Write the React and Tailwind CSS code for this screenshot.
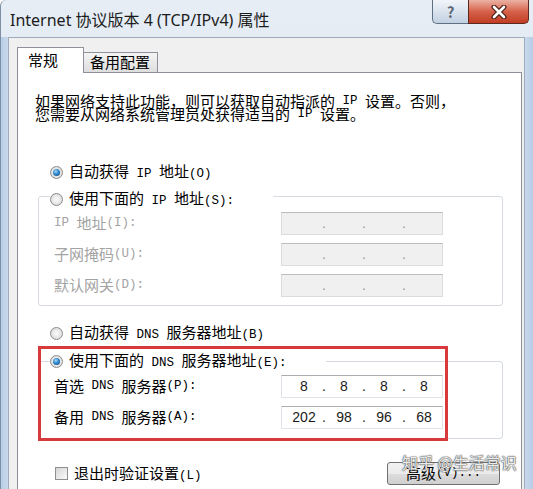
import React from 'react';

// Latin runs are set in a half-width mono face, like SimSun does in the dialog
const Mixed = ({text}) => (
    <>
        {text.split(/([\x20-\x7e]+)/).map((part, i) =>
            /^[\x20-\x7e]+$/.test(part) ? (
                <span key={i} className="font-['Liberation_Mono',monospace] text-[12.5px] whitespace-pre">{part}</span>
            ) : (
                <span key={i}>{part}</span>
            )
        )}
    </>
);

const Radio = ({checked}) => (
    <div
        className="flex h-[13px] w-[13px] shrink-0 items-center justify-center rounded-full border border-[#8c8c8c] bg-[radial-gradient(circle_at_50%_50%,#fbfbfb_0%,#e6e6e6_55%,#cdcdcd_100%)]">
        {checked && (
            <div
                className="h-[7px] w-[7px] rounded-full bg-[radial-gradient(circle_at_40%_35%,#a6dcf8_0%,#2f86cc_45%,#0b3d78_100%)]"/>
        )}
    </div>
);

const IpBox = ({values = ['', '', '', ''], disabled = false}) => (
    <div
        className={`flex h-[23px] w-[162px] items-center border pl-[4px] font-['Liberation_Sans',sans-serif] text-[14px] ${
            disabled
                ? 'border-[#dcdcdc] border-t-[#bdbdbd] bg-[#f0f0f0] text-[#9a9a9a]'
                : 'border-[#e2e3ea] border-t-[#abadb3] bg-white text-[#1a1a1a]'
        }`}
    >
        {values.map((v, i) => (
            <React.Fragment key={i}>
                <span className="w-[36px] text-center">{v}</span>
                {i < 3 && <span className="w-[4px] text-center">.</span>}
            </React.Fragment>
        ))}
    </div>
);

const FieldRow = ({label, values, disabled}) => (
    <div className="flex h-[23px] items-center">
        <div className={`flex h-[23px] w-[227px] items-center whitespace-nowrap ${disabled ? 'text-[#a3a3a3]' : 'text-black'}`}>
            <Mixed text={label}/>
        </div>
        <IpBox values={values} disabled={disabled}/>
    </div>
);

const App = () => {
    return (
        <div
            className="relative flex h-[489px] w-[533px] flex-col overflow-hidden rounded-tl-[6px] border-l border-[#7d8ea5] bg-gradient-to-b from-[#e6edf5] to-[#d0dcea] font-['Noto_Sans_CJK_SC',sans-serif] text-[15px] text-black">
            {/* title bar */}
            <div className="flex h-[37px] shrink-0">
                <span
                    className="ml-[9px] mt-[9px] whitespace-nowrap font-['Noto_Sans','Noto_Sans_CJK_SC',sans-serif] text-[16px] leading-[22px] text-[#1c1c1c]">
                    Internet 协议版本 4 (TCP/IPv4) 属性
                </span>
                <div className="ml-auto mr-[4px] flex h-[24px]">
                    <div
                        className="flex w-[36px] items-center justify-center rounded-bl-[5px] border border-t-0 border-r-0 border-[#5f6f84] bg-gradient-to-b from-[#f1f5fa] via-[#dae3ee] to-[#c2d0e1] text-[15px] font-bold leading-none text-[#5b6777]">
                        ?
                    </div>
                    <div
                        className="flex w-[61px] items-center justify-center rounded-br-[5px] border border-t-0 border-[#5a2a20] bg-gradient-to-b from-[#eab2a4] via-[#d5614a] to-[#c13c22]">
                        <svg width="18" height="14" viewBox="0 0 18 14">
                            <path d="M4 2 L14 12 M14 2 L4 12" stroke="#4a2018" strokeWidth="5" strokeLinecap="round"/>
                            <path d="M4 2 L14 12 M14 2 L4 12" stroke="#ffffff" strokeWidth="2.6" strokeLinecap="round"/>
                        </svg>
                    </div>
                </div>
            </div>

            <div className="flex flex-1">
                <div className="w-[7px] bg-gradient-to-r from-[#b7cde6] to-[#c9d9ec]"/>

                {/* dialog face */}
                <div className="flex flex-1 flex-col border-x border-t border-[#9eabbb] bg-[#f0f0f0] pl-[8px] pr-[2px]">
                    {/* tabs */}
                    <div className="flex h-[34px] shrink-0 items-end">
                        <div
                            className="relative z-10 -mb-px flex h-[26px] w-[67px] items-center border-x border-t border-[#8e9199] bg-white pl-[10px]">
                            常规
                        </div>
                        <div
                            className="-ml-px flex h-[20px] w-[75px] items-center border-x border-t border-[#8e9199] bg-gradient-to-b from-[#f4f4f4] to-[#dedede] pl-[6px]">
                            备用配置
                        </div>
                    </div>

                    {/* tab panel */}
                    <div className="relative flex flex-1 flex-col border-x border-t border-[#8e9199] bg-white pl-[17px]">
                        <div className="mt-[22px] flex flex-col whitespace-nowrap">
                            <div className="flex h-[13px] items-center">
                                <Mixed text="如果网络支持此功能，则可以获取自动指派的 IP 设置。否则，"/>
                            </div>
                            <div className="flex h-[13px] items-center">
                                <Mixed text="您需要从网络系统管理员处获得适当的 IP 设置。"/>
                            </div>
                        </div>

                        <div className="ml-[15px] mt-[41px] flex h-[20px] items-center gap-[6px]">
                            <Radio checked/>
                            <span className="whitespace-nowrap"><Mixed text="自动获得 IP 地址(O)"/></span>
                        </div>

                        {/* static IP group */}
                        <div className="ml-[3px] mt-[14px] w-[465px] rounded-[3px] border border-[#d5dbe0] pb-[8px]">
                            <div
                                className="-mt-[8px] ml-[11px] flex h-[20px] w-[223px] items-center gap-[6px] bg-white">
                                <Radio/>
                                <span className="whitespace-nowrap"><Mixed text="使用下面的 IP 地址(S):"/></span>
                            </div>
                            <div className="mt-[3px] flex flex-col gap-[8px] pl-[15px]">
                                <FieldRow label="IP 地址(I):" disabled/>
                                <FieldRow label="子网掩码(U):" disabled/>
                                <FieldRow label="默认网关(D):" disabled/>
                            </div>
                        </div>

                        <div className="ml-[15px] mt-[17px] flex h-[20px] items-center gap-[6px]">
                            <Radio/>
                            <span className="whitespace-nowrap"><Mixed text="自动获得 DNS 服务器地址(B)"/></span>
                        </div>

                        {/* DNS group */}
                        <div className="ml-[3px] mt-[18px] w-[465px] rounded-[3px] border border-[#d5dbe0] pb-[9px]">
                            <div
                                className="-mt-[11px] ml-[11px] flex h-[20px] w-[276px] items-center gap-[6px] bg-white">
                                <Radio checked/>
                                <span className="whitespace-nowrap"><Mixed text="使用下面的 DNS 服务器地址(E):"/></span>
                            </div>
                            <div className="mt-[4px] flex flex-col gap-[8px] pl-[15px]">
                                <FieldRow label="首选 DNS 服务器(P):" values={['8', '8', '8', '8']}/>
                                <FieldRow label="备用 DNS 服务器(A):" values={['202', '98', '96', '68']}/>
                            </div>
                        </div>

                        <div className="mt-[23px] flex h-[23px] items-center pr-[21px]">
                            <div
                                className="ml-[20px] h-[13px] w-[13px] border border-[#8f8f8f] bg-gradient-to-br from-[#d6d6d6] to-[#fbfbfb]"/>
                            <span className="ml-[6px] whitespace-nowrap"><Mixed text="退出时验证设置(L)"/></span>
                            <div
                                className="ml-auto flex h-[23px] w-[113px] items-center justify-center rounded-[3px] border border-[#707070] bg-[linear-gradient(#f2f2f2_0%,#ebebeb_50%,#dddddd_51%,#cfcfcf_100%)] whitespace-nowrap">
                                <Mixed text="高级(V)..."/>
                            </div>
                        </div>

                        {/* red annotation */}
                        <div
                            className="pointer-events-none absolute left-[20px] top-[273px] h-[95px] w-[410px] border-[3px] border-[#d8393b]"/>
                    </div>
                </div>

                <div className="w-[8px] bg-gradient-to-r from-[#c9d9ec] to-[#b7cde6]"/>
            </div>

            {/* watermark */}
            <span
                className="pointer-events-none absolute left-[401px] top-[452px] whitespace-nowrap text-[16px] leading-[20px] text-white/90 [text-shadow:0_0_1px_#444,0_0_1px_#444,0_0_2px_#777]">
                知乎 @生活常识
            </span>
        </div>
    );
};

export default App;
